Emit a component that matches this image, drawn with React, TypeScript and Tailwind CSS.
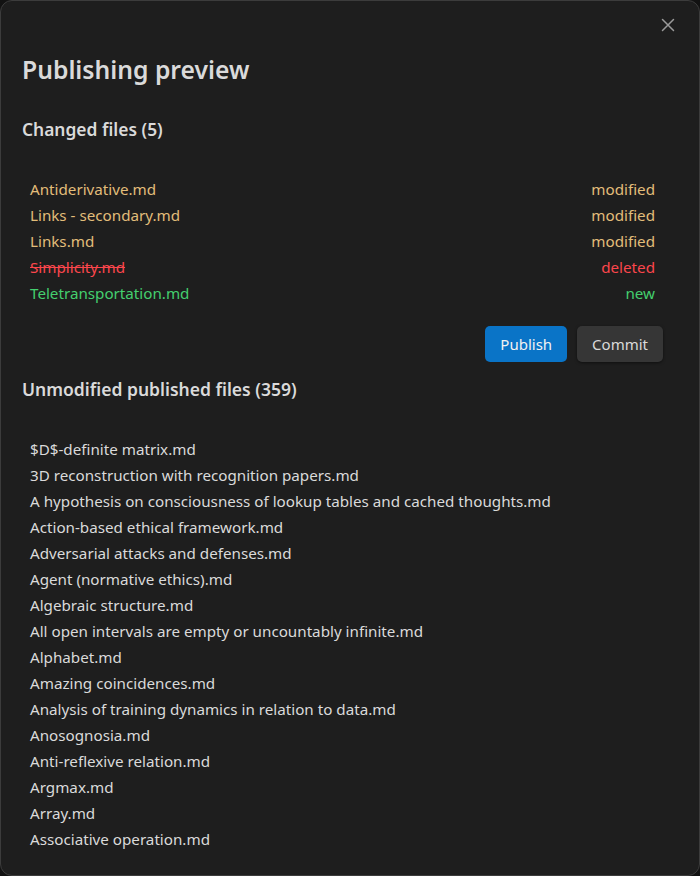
import React from 'react';

const changed = [
  { name: 'Antiderivative.md', status: 'modified' },
  { name: 'Links - secondary.md', status: 'modified' },
  { name: 'Links.md', status: 'modified' },
  { name: 'Simplicity.md', status: 'deleted' },
  { name: 'Teletransportation.md', status: 'new' },
];

const unmodified = [
  '$D$-definite matrix.md',
  '3D reconstruction with recognition papers.md',
  'A hypothesis on consciousness of lookup tables and cached thoughts.md',
  'Action-based ethical framework.md',
  'Adversarial attacks and defenses.md',
  'Agent (normative ethics).md',
  'Algebraic structure.md',
  'All open intervals are empty or uncountably infinite.md',
  'Alphabet.md',
  'Amazing coincidences.md',
  'Analysis of training dynamics in relation to data.md',
  'Anosognosia.md',
  'Anti-reflexive relation.md',
  'Argmax.md',
  'Array.md',
  'Associative operation.md',
];

function statusColor(status: string) {
  if (status === 'deleted') return 'text-[#fb464c]';
  if (status === 'new') return 'text-[#44cf6e]';
  return 'text-[#e2bd7a]';
}

export default function App() {
  return (
    <div className="h-[876px] w-[700px] bg-[#121212] font-['Noto_Sans',sans-serif] text-[#dadada]">
      <div className="relative flex h-full flex-col rounded-[12px] border border-[#3c3c3c] bg-[#1e1e1e] px-[21px]">
        {/* close button */}
        <button className="absolute right-[24px] top-[17px] flex h-[14px] w-[14px] items-center justify-center text-[#9a9a9a]">
          <svg width="14" height="14" viewBox="0 0 14 14" fill="none" stroke="currentColor" strokeWidth="1.5" strokeLinecap="round">
            <path d="M1.5 1.5L12.5 12.5M12.5 1.5L1.5 12.5" />
          </svg>
        </button>

        <h1 className="mt-[51px] text-[24.7px] font-semibold leading-[36px]">Publishing preview</h1>

        <h2 className="mt-[28px] text-[17.4px] font-semibold leading-[26px]">Changed files (5)</h2>

        <div className="mt-[34px] flex flex-col pl-[8px] pr-[23px] text-[15.2px]">
          {changed.map((f) => (
            <div key={f.name} className="flex h-[26px] items-center justify-between">
              <span className={`${statusColor(f.status)} ${f.status === 'deleted' ? 'line-through' : ''}`}>{f.name}</span>
              <span className={statusColor(f.status)}>{f.status}</span>
            </div>
          ))}
        </div>

        <div className="mt-[20px] flex justify-end gap-[10px] pr-[15px]">
          <button className="h-[36px] rounded-[5px] bg-[#0a74c7] px-[15px] text-[15px] text-[#f2f2f2]">Publish</button>
          <button className="h-[36px] rounded-[5px] bg-[#363636] px-[15px] text-[15px] text-[#dadada] shadow-[0_1px_3px_rgba(0,0,0,0.5)]">Commit</button>
        </div>

        <h2 className="mt-[14px] text-[17.5px] font-semibold leading-[26px]">Unmodified published files (359)</h2>

        <div className="mt-[34px] flex flex-col pl-[8px] text-[15.2px]">
          {unmodified.map((f) => (
            <div key={f} className="flex h-[26px] items-center">
              {f}
            </div>
          ))}
        </div>
      </div>
    </div>
  );
}
